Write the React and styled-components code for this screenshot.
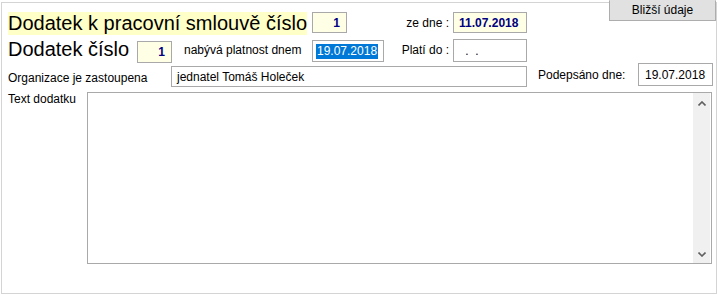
import React from 'react';
import styled, { createGlobalStyle } from 'styled-components';

const GlobalStyle = createGlobalStyle`
  html, body {
    margin: 0;
    padding: 0;
    background: #fff;
  }
  body {
    font-family: "Liberation Sans", Arial, sans-serif;
    font-size: 12px;
    color: #000;
  }
`;

const Page = styled.div`
  position: relative;
  box-sizing: border-box;
  width: 718px;
  height: 295px;
  padding: 2px 1px 0 1px;
`;

const Frame = styled.div`
  box-sizing: border-box;
  width: 716px;
  height: 292px;
  border: 1px solid #d4d4d4;
  padding: 9px 0 0 6px;
  display: flex;
  flex-direction: column;
`;

const DetailButton = styled.button`
  position: absolute;
  top: 0;
  left: 609px;
  box-sizing: border-box;
  width: 107px;
  height: 21px;
  margin: 0;
  padding: 0 0 1px;
  border: 1px solid #adadad;
  border-top-color: #e1e1e1;
  background: #e1e1e1;
  font-family: inherit;
  font-size: 12px;
  color: #000;
`;

const Row = styled.div`
  display: flex;
  align-items: flex-start;
  height: ${p => p.$h}px;
`;

const Title = styled.div`
  box-sizing: border-box;
  width: ${p => p.$w}px;
  height: 23px;
  line-height: 23px;
  font-size: 20px;
  white-space: nowrap;
  background: ${p => (p.$marked ? '#ffffc8' : 'transparent')};
`;

const Label = styled.div`
  box-sizing: border-box;
  width: ${p => p.$w}px;
  margin-left: ${p => p.$ml || 0}px;
  margin-top: ${p => p.$top || 0}px;
  padding-right: ${p => p.$pr || 0}px;
  line-height: 14px;
  text-align: ${p => p.$align || 'left'};
  white-space: nowrap;
`;

const Field = styled.div`
  box-sizing: border-box;
  display: flex;
  align-items: center;
  justify-content: ${p => (p.$right ? 'flex-end' : 'flex-start')};
  width: ${p => p.$w}px;
  height: ${p => p.$h}px;
  margin-left: ${p => p.$ml || 0}px;
  margin-top: ${p => p.$top || 0}px;
  padding: 0 ${p => (p.$right ? 6 : 0)}px 0 ${p => p.$pl || 0}px;
  border: 1px solid #a9a9a9;
  background: ${p => (p.$tint ? '#ffffe6' : '#fff')};
  color: ${p => (p.$bold ? '#000080' : '#000')};
  font-weight: ${p => (p.$bold ? 700 : 400)};
  white-space: pre;
`;

const Selected = styled.span`
  background: #0078d7;
  color: #fff;
  line-height: 15px;
  padding: 0 1px;
`;

const Memo = styled.div`
  box-sizing: border-box;
  display: flex;
  width: 625px;
  height: 172px;
  border: 1px solid #a9a9a9;
  background: #fff;
`;

const MemoBody = styled.div`
  flex: 1;
`;

const ScrollTrack = styled.div`
  display: flex;
  flex-direction: column;
  justify-content: space-between;
  align-items: center;
  width: 17px;
  margin-right: 1px;
  padding: 8px 0 6px;
  box-sizing: border-box;
  background: #f0f0f0;
`;

const Chevron = ({ down }) => (
  <svg width="8" height="5" viewBox="0 0 8 5">
    <path
      d={down ? 'M0.5 0.5 L4 4 L7.5 0.5' : 'M0.5 4.5 L4 1 L7.5 4.5'}
      fill="none"
      stroke="#606060"
      strokeWidth="1.6"
    />
  </svg>
);

export default function App() {
  return (
    <Page>
      <GlobalStyle />
      <Frame>
        <Row $h={26}>
          <Title $w={299} $marked>Dodatek k pracovní smlouvě číslo</Title>
          <Field $w={35} $h={21} $ml={5} $tint $bold $right>1</Field>
          <Label $w={103} $top={4} $align="right" $pr={1}>ze dne :</Label>
          <Field $w={74} $h={21} $ml={3} $tint $bold $pl={5}>11.07.2018</Field>
        </Row>
        <Row $h={25}>
          <Title $w={129}>Dodatek číslo</Title>
          <Field $w={35} $h={22} $top={3} $tint $bold $right>1</Field>
          <Label $w={128} $ml={12} $top={5}>nabývá platnost dnem</Label>
          <Field $w={72} $h={22} $top={2} $pl={3}><Selected>19.07.2018</Selected></Field>
          <Label $w={66} $top={5} $align="right" $pr={1}>Platí do :</Label>
          <Field $w={74} $h={23} $ml={3} $top={1} $pl={8}>{' .  .'}</Field>
        </Row>
        <Row $h={29}>
          <Label $w={163} $top={8}>Organizace je zastoupena</Label>
          <Field $w={356} $h={21} $top={3} $pl={5}>jednatel Tomáš Holeček</Field>
          <Label $w={100} $ml={11} $top={5}>Podepsáno dne:</Label>
          <Field $w={75} $h={23} $pl={6}>19.07.2018</Field>
        </Row>
        <Row $h={172}>
          <Label $w={79}>Text dodatku</Label>
          <Memo>
            <MemoBody />
            <ScrollTrack>
              <Chevron />
              <Chevron down />
            </ScrollTrack>
          </Memo>
        </Row>
      </Frame>
      <DetailButton>Bližší údaje</DetailButton>
    </Page>
  );
}
